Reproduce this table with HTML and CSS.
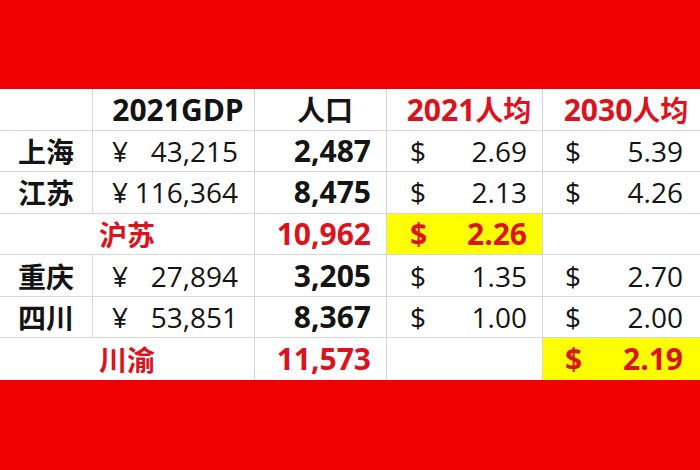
FILE: index.html
```html
<!DOCTYPE html>
<html lang="zh">
<head>
<meta charset="utf-8">
<title>GDP 人均</title>
<link rel="stylesheet" href="styles.css">
</head>
<body>
<div class="page">
  <div class="sheet">
    <div class="cell"></div>
    <div class="cell head">2021GDP</div>
    <div class="cell head"><span class="cjk">人口</span></div>
    <div class="cell head red">2021<span class="cjk">人均</span></div>
    <div class="cell head red last">2030<span class="cjk">人均</span></div>

    <div class="cell name">上海</div>
    <div class="cell acct c1"><span>¥</span><span>43,215</span></div>
    <div class="cell pop">2,487</div>
    <div class="cell acct c3"><span>$</span><span>2.69</span></div>
    <div class="cell acct c4 last"><span>$</span><span>5.39</span></div>

    <div class="cell name">江苏</div>
    <div class="cell acct c1"><span>¥</span><span>116,364</span></div>
    <div class="cell pop">8,475</div>
    <div class="cell acct c3"><span>$</span><span>2.13</span></div>
    <div class="cell acct c4 last"><span>$</span><span>4.26</span></div>

    <div class="cell name merged red">沪苏</div>
    <div class="cell pop red">10,962</div>
    <div class="cell acct c3 hl"><span>$</span><span>2.26</span></div>
    <div class="cell last"></div>

    <div class="cell name">重庆</div>
    <div class="cell acct c1"><span>¥</span><span>27,894</span></div>
    <div class="cell pop">3,205</div>
    <div class="cell acct c3"><span>$</span><span>1.35</span></div>
    <div class="cell acct c4 last"><span>$</span><span>2.70</span></div>

    <div class="cell name">四川</div>
    <div class="cell acct c1"><span>¥</span><span>53,851</span></div>
    <div class="cell pop">8,367</div>
    <div class="cell acct c3"><span>$</span><span>1.00</span></div>
    <div class="cell acct c4 last"><span>$</span><span>2.00</span></div>

    <div class="cell name merged red bottom">川渝</div>
    <div class="cell pop red bottom">11,573</div>
    <div class="cell bottom"></div>
    <div class="cell acct c4 hl last bottom"><span>$</span><span>2.19</span></div>
  </div>
</div>
</body>
</html>
```
FILE: styles.css
```css
html, body {
  margin: 0;
  padding: 0;
}
body {
  background: #f00000;
  font-family: "Open Sans", "Noto Sans CJK SC", sans-serif;
  color: #141414;
}
.page {
  width: 700px;
  height: 470px;
  padding-top: 89px;
  box-sizing: border-box;
  background: #f00000;
}
.sheet {
  display: grid;
  grid-template-columns: 93px 162px 132px 156px 157px;
  grid-template-rows: repeat(7, 1fr);
  height: 291px;
  background: #ffffff;
}
.cell {
  display: flex;
  align-items: center;
  justify-content: center;
  border-right: 1px solid #d6d6d6;
  border-bottom: 1px solid #d6d6d6;
  font-size: 28px;
  line-height: 1;
  white-space: nowrap;
  box-sizing: border-box;
}
.cell.last {
  border-right: none;
}
.cell.bottom {
  border-bottom: none;
}
.head {
  font-weight: 700;
  font-size: 30px;
  padding-top: 1px;
  padding-left: 9px;
}
.head .cjk {
  font-size: 28px;
}
.name {
  font-weight: 700;
  font-family: "Noto Sans CJK SC", sans-serif;
}
.merged {
  grid-column: span 2;
}
.red {
  color: #dc121c;
}
.pop {
  justify-content: flex-end;
  padding-right: 15px;
  font-weight: 700;
  font-size: 30px;
}
.acct {
  justify-content: space-between;
}
.c1 {
  padding: 0 16px 0 19px;
}
.c3 {
  padding: 0 15px 0 23px;
}
.c4 {
  padding: 0 17px 0 22px;
}
.hl {
  background: #ffff00;
  color: #dc121c;
  font-weight: 700;
  font-size: 30px;
}
```
